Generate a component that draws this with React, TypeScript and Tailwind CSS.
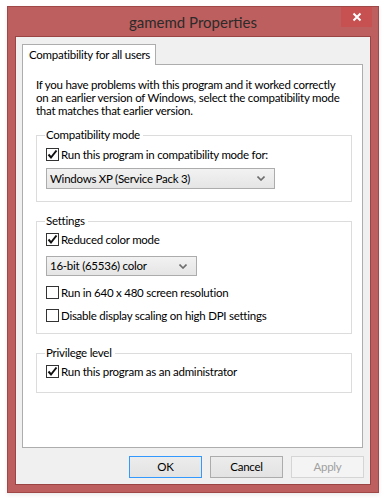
import React from "react";

const font = { fontFamily: 'Lato, "Open Sans", sans-serif' };

function Check({ checked, label }: { checked?: boolean; label: string }) {
  return (
    <div className="flex items-center h-[13px] ml-[9px]">
      <div className="w-[13px] h-[13px] border border-[#333333] bg-white flex items-center justify-center shrink-0">
        {checked && (
          <svg width="11" height="11" viewBox="0 0 11 11">
            <path d="M1.5 5.5 L4 8.5 L9.5 1.5" fill="none" stroke="#111" strokeWidth="2" />
          </svg>
        )}
      </div>
      <span className="ml-[2px] text-[11.5px] tracking-[-0.25px] leading-none text-black whitespace-nowrap">{label}</span>
    </div>
  );
}

function Select({ value, w, h }: { value: string; w: string; h: string }) {
  return (
    <div
      className={`ml-[9px] ${w} ${h} border border-[#acacac] bg-gradient-to-b from-[#f2f2f2] to-[#e5e5e5] flex items-center justify-between pl-[3px] pr-[9px]`}
    >
      <span className="text-[11.5px] tracking-[-0.25px] leading-none text-black whitespace-nowrap">{value}</span>
      <svg width="8" height="5" viewBox="0 0 8 5">
        <path d="M0.5 0.5 L4 4 L7.5 0.5" fill="none" stroke="#6d6d6d" strokeWidth="1.6" />
      </svg>
    </div>
  );
}

function Group({ title, className, children }: { title: string; className: string; children: React.ReactNode }) {
  return (
    <div className={`relative w-[316px] border border-[#dcdcdc] ${className}`}>
      <span className="absolute -top-[8px] left-[8px] bg-white pl-[1px] pr-[3px] text-[11.5px] tracking-[-0.25px] leading-[14px] text-black whitespace-nowrap">
        {title}
      </span>
      {children}
    </div>
  );
}

function Btn({ label, kind }: { label: string; kind?: "default" | "disabled" }) {
  const cls =
    kind === "default"
      ? "border-[#3399ff] bg-gradient-to-b from-[#ececec] to-[#e3e3e3] text-black"
      : kind === "disabled"
      ? "border-[#d5d5d5] bg-[#f4f4f4] text-[#a0a0a0]"
      : "border-[#acacac] bg-gradient-to-b from-[#ececec] to-[#e3e3e3] text-black";
  return (
    <div className={`w-[73px] h-[22px] border flex items-center justify-center text-[11.5px] tracking-[-0.25px] ${cls}`}>{label}</div>
  );
}

export default function App() {
  return (
    <div className="w-[385px] h-[501px] bg-white overflow-hidden" style={font}>
      <div className="ml-[7px] mt-[6px] w-[372px] h-[487px] bg-[#bd5f5e] border border-[#a04848] flex flex-col shadow-[0_2px_4px_rgba(0,0,0,0.08)]">
        <div className="relative h-[29px] flex items-center justify-center">
          <span className="text-[15px] text-[#2b2b2b] leading-none mt-[2px]">gamemd Properties</span>
          <div className="absolute top-0 right-[6px] w-[31px] h-[20px] bg-[#c75050] flex items-center justify-center">
            <svg width="10" height="10" viewBox="0 0 10 10">
              <path d="M1.5 1.5 L8.5 8.5 M8.5 1.5 L1.5 8.5" stroke="#fff" strokeWidth="2" />
            </svg>
          </div>
        </div>
        <div className="mx-[7px] h-[449px] border border-[#9a4444] bg-[#f0f0f0] flex flex-col pl-[6px] pt-[7px]">
          <div className="w-[134px] h-[21px] border border-b-0 border-[#adadad] bg-white flex items-center pl-[6px] text-[11.5px] tracking-[-0.25px] text-black relative z-10 -mb-px whitespace-nowrap">
            Compatibility for all users
          </div>
          <div className="w-[341px] h-[384px] border border-[#adadad] bg-white flex flex-col pl-[13px] pt-[13px]">
            <p className="text-[11.5px] tracking-[-0.25px] leading-[13px] text-black w-[310px]">
              If you have problems with this program and it worked correctly on an earlier version of Windows, select
              the compatibility mode that matches that earlier version.
            </p>
            <Group title="Compatibility mode" className="mt-[18px] pt-[12px] pb-[12px]">
              <Check checked label="Run this program in compatibility mode for:" />
              <div className="mt-[7px]">
                <Select value="Windows XP (Service Pack 3)" w="w-[229px]" h="h-[21px]" />
              </div>
            </Group>
            <Group title="Settings" className="mt-[19px] pt-[11px] pb-[11px]">
              <Check checked label="Reduced color mode" />
              <div className="mt-[10px]">
                <Select value="16-bit (65536) color" w="w-[151px]" h="h-[20px]" />
              </div>
              <div className="mt-[10px]">
                <Check label="Run in 640 x 480 screen resolution" />
              </div>
              <div className="mt-[10px]">
                <Check label="Disable display scaling on high DPI settings" />
              </div>
            </Group>
            <Group title="Privilege level" className="mt-[19px] pt-[11px] pb-[14px]">
              <Check checked label="Run this program as an administrator" />
            </Group>
          </div>
          <div className="flex gap-[8px] ml-[107px] mt-[8px]">
            <Btn label="OK" kind="default" />
            <Btn label="Cancel" />
            <Btn label="Apply" kind="disabled" />
          </div>
        </div>
      </div>
    </div>
  );
}
